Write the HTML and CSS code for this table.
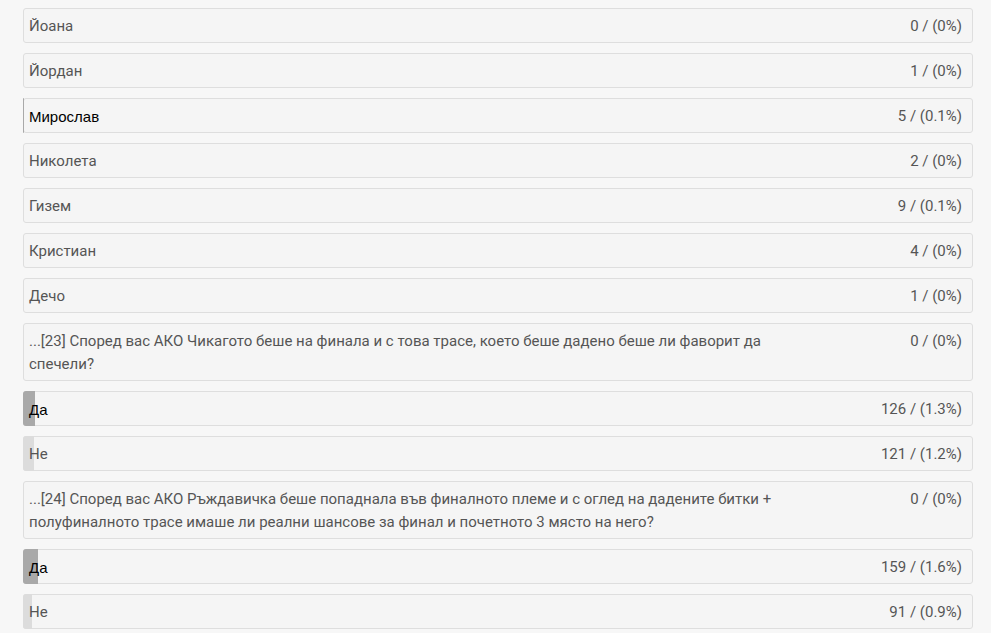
FILE: index.html
```html
<!DOCTYPE html>
<html lang="bg">
<head>
<meta charset="utf-8">
<link rel="stylesheet" href="styles.css">
</head>
<body>
<div class="list">
  <div class="row"><span class="label">Йоана</span><span class="count">0 / (0%)</span></div>
  <div class="row"><span class="label">Йордан</span><span class="count">1 / (0%)</span></div>
  <div class="row win"><div class="bar dark" style="width:0.1%"></div><span class="label">Мирослав</span><span class="count">5 / (0.1%)</span></div>
  <div class="row"><span class="label">Николета</span><span class="count">2 / (0%)</span></div>
  <div class="row"><span class="label">Гизем</span><span class="count">9 / (0.1%)</span></div>
  <div class="row"><span class="label">Кристиан</span><span class="count">4 / (0%)</span></div>
  <div class="row"><span class="label">Дечо</span><span class="count">1 / (0%)</span></div>
  <div class="row question"><span class="label">...[23] Според вас АКО Чикагото беше на финала и с това трасе, което беше дадено беше ли фаворит да спечели?</span><span class="count">0 / (0%)</span></div>
  <div class="row win"><div class="bar dark" style="width:1.3%"></div><span class="label">Да</span><span class="count">126 / (1.3%)</span></div>
  <div class="row"><div class="bar light" style="width:1.2%"></div><span class="label">Не</span><span class="count">121 / (1.2%)</span></div>
  <div class="row question"><span class="label">...[24] Според вас АКО Ръждавичка беше попаднала във финалното племе и с оглед на дадените битки + полуфиналното трасе имаше ли реални шансове за финал и почетното 3 място на него?</span><span class="count">0 / (0%)</span></div>
  <div class="row win"><div class="bar dark" style="width:1.6%"></div><span class="label">Да</span><span class="count">159 / (1.6%)</span></div>
  <div class="row"><div class="bar light" style="width:0.9%"></div><span class="label">Не</span><span class="count">91 / (0.9%)</span></div>
</div>
</body>
</html>
```
FILE: styles.css
```css
html, body {
  margin: 0;
  padding: 0;
  background: #f7f7f7;
}
body {
  font-family: Roboto, "Noto Sans", sans-serif;
  font-size: 15px;
  color: #555;
}
.list {
  width: 950px;
  margin-left: 23px;
  padding-top: 8px;
  display: flex;
  flex-direction: column;
  gap: 10px;
}
.row {
  position: relative;
  display: flex;
  justify-content: space-between;
  align-items: flex-start;
  box-sizing: border-box;
  background: #f5f5f5;
  border: 1px solid #dedede;
  border-radius: 3px;
  padding: 6px 10px 4px 5px;
  line-height: 23px;
}
.label {
  position: relative;
  flex: 0 1 760px;
}
.count {
  position: relative;
  white-space: nowrap;
}
.win .label {
  font-family: "Liberation Sans", Arial, sans-serif;
  color: #000;
}
.bar {
  position: absolute;
  left: -1px;
  top: -1px;
  bottom: -1px;
  border-radius: 3px 0 0 3px;
}
.bar.dark { background: #a9a9a9; min-width: 1px; }
.bar.light { background: #dcdcdc; }
```
